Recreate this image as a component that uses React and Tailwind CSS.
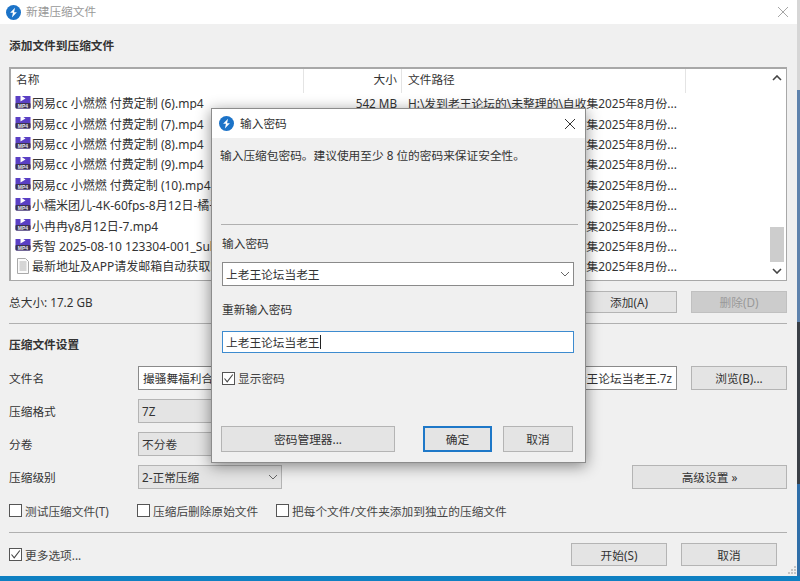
const paths = "H:\\发到老王论坛的\\未整理的\\自收集2025年8月份...";

const files = [
  { name: "网易cc 小燃燃 付费定制 (6).mp4", size: "542 MB" },
  { name: "网易cc 小燃燃 付费定制 (7).mp4", size: "" },
  { name: "网易cc 小燃燃 付费定制 (8).mp4", size: "" },
  { name: "网易cc 小燃燃 付费定制 (9).mp4", size: "" },
  { name: "网易cc 小燃燃 付费定制 (10).mp4", size: "" },
  { name: "小糯米团儿-4K-60fps-8月12日-橘子.mp4", size: "" },
  { name: "小冉冉y8月12日-7.mp4", size: "" },
  { name: "秀智 2025-08-10 123304-001_Sub.mp4", size: "" },
  { name: "最新地址及APP请发邮箱自动获取!.txt", size: "", text: true },
];

const Logo = () => (
  <svg width="15" height="15" viewBox="0 0 16 16" className="shrink-0">
    <circle cx="8" cy="8" r="8" fill="#1c73c8" />
    <path d="M9.6 2.8 4.4 8.2h3L6.3 13.2l5.3-5.6h-3z" fill="#fff" />
  </svg>
);

const Mp4Icon = () => (
  <svg width="16" height="16" viewBox="0 0 16 16" className="shrink-0 -mt-[5px]">
    <rect x="0.5" y="0.5" width="15" height="15" rx="1.5" fill="#5a3fc4" />
    <rect x="0.5" y="10" width="15" height="5.5" rx="1" fill="#3b3350" />
    <path d="M5.5 2.2 10.5 5.4 5.5 8.6z" fill="#fff" />
    <text x="8" y="14.6" textAnchor="middle" fontSize="5" fontWeight="700" fill="#e8e6f0" fontFamily="Liberation Sans, sans-serif">MP4</text>
  </svg>
);

const TextIcon = () => (
  <svg width="16" height="16" viewBox="0 0 16 16" className="shrink-0">
    <path d="M2.5.5h8l3 3v12h-11z" fill="#fbfbfb" stroke="#a9a9a9" />
    <path d="M4.5 4h7M4.5 6h7M4.5 8h7M4.5 10h7M4.5 12h7" stroke="#b0b0b0" />
  </svg>
);

const Chevron = ({ className = "", bold }) => (
  <svg width="10" height="6" viewBox="0 0 10 6" className={className}>
    <path d="M1 1l4 4 4-4" fill="none" stroke={bold ? "#444" : "#666"} strokeWidth={bold ? 1.6 : 1} />
  </svg>
);

const Button = ({ children, className = "", disabled, focused }) => {
  let look = "bg-[#e4e4e4] border border-[#b4b4b4] text-[#333]";
  if (disabled) look = "bg-[#cccccc] border border-[#c0c0c0] text-[#999]";
  if (focused) look = "bg-[#e4e4e4] border-2 border-[#1e78c8] text-[#333]";
  return (
    <div className={`flex items-center justify-center pt-[2px] shrink-0 ${look} ${className}`}>
      {children}
    </div>
  );
};

const Check = ({ label, checked, className = "" }) => (
  <div className={`flex items-center gap-[3px] ${className}`}>
    <div className="w-[13px] h-[13px] bg-white border border-[#555] flex items-center justify-center shrink-0">
      {checked && (
        <svg width="11" height="11" viewBox="0 0 11 11">
          <path d="M1.5 5.5 4.2 8.8 9.8 1.5" fill="none" stroke="#444" strokeWidth="1.1" />
        </svg>
      )}
    </div>
    <span className="text-[#444] whitespace-nowrap pt-[2px]">{label}</span>
  </div>
);

const FormRow = ({ label, children }) => (
  <div className="flex items-center h-6">
    <span className="w-[129px] shrink-0 text-[#333] pt-[2px]">{label}</span>
    {children}
  </div>
);

const DropDown = ({ children }) => (
  <div className="w-[144px] h-full bg-[#e4e4e4] border border-[#b4b4b4] flex items-center justify-between pl-[3px] pr-[3px] text-[#333]">
    <span className="pt-[2px]">{children}</span>
    <Chevron />
  </div>
);

const Divider = ({ className = "" }) => <div className={`h-px bg-[#b0b0b0] ${className}`} />;

const FileList = () => (
  <div className="mt-3 h-[214px] border-2 border-[#a8a8a8] border-r border-b bg-white flex overflow-hidden">
    <div className="flex-1 min-w-0">
      <div className="flex h-[24px] text-[#333]">
        <div className="w-[293px] pl-[5px] pb-[2px] flex items-center border-r border-[#e4e4e4]">名称</div>
        <div className="w-[98px] pr-[4px] pb-[2px] flex items-center justify-end border-r border-[#e4e4e4]">大小</div>
        <div className="w-[284px] pl-[6px] pb-[2px] flex items-center border-r border-[#e4e4e4]">文件路径</div>
      </div>
      {files.map((file) => (
        <div key={file.name} className="flex items-center h-[20.4px] text-[#333] whitespace-nowrap">
          <div className="w-[293px] pl-[4px] flex items-center gap-[1px] overflow-hidden text-[12px]">
            {file.text ? <TextIcon /> : <Mp4Icon />}
            <span className="pt-[2px]">{file.name}</span>
          </div>
          <div className="w-[98px] pr-[5px] pt-[2px] text-right">{file.size}</div>
          <div className="w-[284px] pl-[6px] pt-[2px] text-[11.8px]">{paths}</div>
        </div>
      ))}
    </div>
    <div className="w-[16px] shrink-0 flex flex-col pl-[2px]">
      <Chevron bold className="mt-[6px] rotate-180" />
      <div className="mt-[146px] -ml-[2px] w-[14px] h-[35px] bg-[#cdcdcd]" />
      <Chevron bold className="mt-[6px]" />
    </div>
  </div>
);

const PasswordDialog = () => (
  <div className="absolute left-[211px] top-[108px] w-[375px] h-[355px] bg-[#f0f0f0] border border-[#8c8c8c] shadow-[0_3px_14px_rgba(0,0,0,0.45)]">
    <div className="h-[29px] bg-white flex items-center pl-[7px] pr-[8px] gap-[6px]">
      <Logo />
      <span className="text-[#333]">输入密码</span>
      <svg width="12" height="12" viewBox="0 0 12 12" className="ml-auto mr-[1px]">
        <path d="M1 1l10 10M11 1 1 11" stroke="#333" strokeWidth="1" />
      </svg>
    </div>
    <div className="pl-[8px] pr-[7px]">
      <div className="mt-[9px] h-[18px] flex items-center text-[#333]">输入压缩包密码。建议使用至少 8 位的密码来保证安全性。</div>
      <Divider className="mt-[59px] ml-px" />
      <div className="pl-[2px] pr-[4px]">
        <div className="mt-[9px] h-[18px] pt-[2px] flex items-center text-[#333]">输入密码</div>
        <div className="mt-[10px] h-6 bg-white border border-[#8a8a8a] flex items-center justify-between pl-[3px] pr-[3px] text-[#333]">
          <span className="pt-[2px]">上老王论坛当老王</span>
          <Chevron />
        </div>
        <div className="mt-[14px] h-[18px] pt-[2px] flex items-center text-[#333]">重新输入密码</div>
        <div className="mt-[13px] h-[22px] bg-white border border-[#3d8bcf] flex items-center pl-[3px] text-[#333]">
          <span className="pt-[2px]">上老王论坛当老王</span>
          <span className="w-px h-[14px] bg-[#222]" />
        </div>
        <Check label="显示密码" checked className="mt-[17px] h-4" />
      </div>
      <div className="mt-[40px] h-[26px] flex ml-px pr-[4px]">
        <Button className="w-[174px]">密码管理器...</Button>
        <Button focused className="w-[69px] ml-[28px]">确定</Button>
        <Button className="w-[70px] ml-[11px]">取消</Button>
      </div>
    </div>
  </div>
);

const App = () => (
  <div className="w-[800px] h-[581px] relative overflow-hidden flex flex-col text-[11.7px] leading-none font-['Noto_Sans','Noto_Sans_CJK_SC',sans-serif]">
    <div className="flex-1 min-h-0 flex">
      <div className="w-[797px] bg-[#f0f0f0] flex flex-col relative">
        <div className="h-6 bg-white flex items-center pl-[6px] pr-[8px] gap-[5px]">
          <Logo />
          <span className="text-[#999]">新建压缩文件</span>
          <svg width="12" height="12" viewBox="0 0 12 12" className="ml-auto">
            <path d="M1 1l10 10M11 1 1 11" stroke="#a6a6a6" strokeWidth="1" />
          </svg>
        </div>
        <div className="pl-[9px] pr-[10px] flex flex-col flex-1">
          <div className="mt-[13px] h-[18px] flex items-center font-bold text-[#333]">添加文件到压缩文件</div>
          <FileList />
          <div className="mt-[10px] h-[22px] flex items-center text-[#333]">
            <span className="pt-[2px]">总大小: 17.2 GB</span>
            <Button className="ml-auto w-[96px] h-full">添加(A)</Button>
            <Button disabled className="ml-[14px] w-[96px] h-full">删除(D)</Button>
          </div>
          <Divider className="mt-[10px]" />
          <div className="mt-[11px] h-[18px] pt-[2px] flex items-center font-bold text-[#333]">压缩文件设置</div>
          <div className="mt-[13px] flex flex-col gap-[9px]">
            <FormRow label="文件名">
              <div className="flex-1 h-full bg-white border border-[#8a8a8a] pt-[2px] flex items-center justify-between px-[4px] text-[#333] whitespace-nowrap">
                <span>撮骚舞福利合集</span>
                <span>上老王论坛当老王.7z</span>
              </div>
              <Button className="ml-[14px] w-[96px] h-full">浏览(B)...</Button>
            </FormRow>
            <FormRow label="压缩格式"><DropDown>7Z</DropDown></FormRow>
            <FormRow label="分卷"><DropDown>不分卷</DropDown></FormRow>
            <FormRow label="压缩级别">
              <DropDown>2-正常压缩</DropDown>
              <Button className="ml-auto w-[155px] h-full">高级设置 »</Button>
            </FormRow>
          </div>
          <div className="mt-[14px] h-4 flex items-center">
            <Check label="测试压缩文件(T)" className="w-[128px]" />
            <Check label="压缩后删除原始文件" className="w-[139px]" />
            <Check label="把每个文件/文件夹添加到独立的压缩文件" />
          </div>
          <Divider className="mt-[13px]" />
          <div className="mt-[10px] h-[23px] flex items-center">
            <Check label="更多选项..." checked />
            <Button className="ml-auto w-[96px] h-full">开始(S)</Button>
            <Button className="ml-[14px] mr-[10px] w-[96px] h-full">取消</Button>
          </div>
        </div>
        {/* resize grip */}
        <svg width="9" height="9" viewBox="0 0 9 9" className="absolute right-[1px] bottom-[1px]">
          <path d="M7 0h2v2H7zM4 3h2v2H4zM7 3h2v2H7zM1 6h2v2H1zM4 6h2v2H4zM7 6h2v2H7z" fill="#c4c4c4" />
        </svg>
      </div>
      <div className="w-[3px] flex flex-col">
        <div className="h-[90px] bg-[#d6d6d6]" />
        <div className="h-[232px] bg-[#5f83ad]" />
        <div className="flex-1 bg-[#3a3f46]" />
        <div className="h-[92px] bg-[#2f6ea8]" />
      </div>
    </div>
    <div className="h-[5px] bg-[#0f80c2]" />
    <PasswordDialog />
  </div>
);

export default App;
